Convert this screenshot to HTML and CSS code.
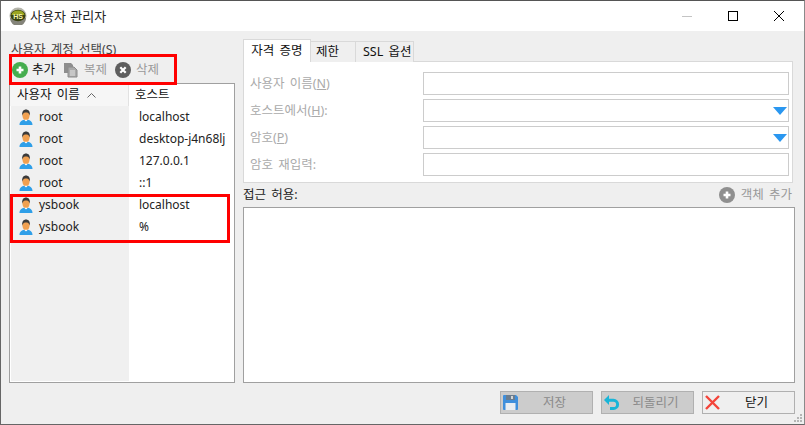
FILE: index.html
```html
<!DOCTYPE html>
<html lang="ko">
<head>
<meta charset="utf-8">
<title>사용자 관리자</title>
<link rel="stylesheet" href="styles.css">
</head>
<body>
<div class="window">
  <header class="titlebar">
    <svg class="app-icon" width="18" height="18" viewBox="0 0 18 18"><circle cx="9" cy="9" r="8.500" fill="#b5b5ab"/><path d="M1 11a8 8 0 0 0 16 0z" fill="#84847a"/><ellipse cx="9" cy="8.500" rx="7.500" ry="5.800" fill="#39420f"/><path d="M2.500 8a6.500 4.500 0 0 1 13 0z" fill="#9aa622"/><text x="9" y="11.500" class="app-text" text-anchor="middle">HS</text></svg>
    <span class="title">사용자 관리자</span>
    <div class="controls">
      <svg width="46" height="31" viewBox="0 0 46 31"><path d="M18 15.500h10" stroke="#c4c4c4"/></svg>
      <svg width="46" height="31" viewBox="0 0 46 31"><rect x="18.500" y="10.500" width="9" height="9" fill="none" stroke="#000"/></svg>
      <svg width="46" height="31" viewBox="0 0 46 31"><path d="M18 10l10 10M28 10l-10 10" stroke="#000" fill="none"/></svg>
    </div>
  </header>
  <main class="content">
    <section class="left">
      <div class="left-label">사용자 계정 선택(S)</div>
      <div class="toolbar">
        <span class="tool">
          <svg width="16" height="16" viewBox="0 0 16 16"><circle cx="8" cy="8" r="8" fill="#45ad4e"/><path d="M8 4.500v7M4.500 8h7" stroke="#fff" stroke-width="2.600"/></svg>
          <span>추가</span>
        </span>
        <span class="tool off">
          <svg width="16" height="16" viewBox="0 0 16 16"><path d="M1 1h7l2 2v8H1z" fill="#8d8d8d"/><path d="M5 5h6l3 3v7H5z" fill="#a9a9a9" stroke="#8a8a8a"/><path d="M7 9h5M7 11h5M7 13h5" stroke="#e4e4e4"/></svg>
          <span>복제</span>
        </span>
        <span class="tool off">
          <svg width="16" height="16" viewBox="0 0 16 16"><circle cx="8" cy="8" r="8" fill="#5e5e5e"/><path d="M5.300 5.300l5.400 5.400M10.700 5.300l-5.400 5.400" stroke="#fff" stroke-width="2.200"/></svg>
          <span>삭제</span>
        </span>
      </div>
      <div class="list">
        <div class="list-head">
          <div class="head-name">사용자 이름 <svg width="9" height="5" viewBox="0 0 9 5"><path d="M.5 4.500l4-4 4 4" fill="none" stroke="#666"/></svg></div>
          <div class="head-host">호스트</div>
        </div>
        <div class="list-body">
          <div class="name-col">
            <div class="row"><svg class="user" viewBox="0 0 16 16"><use href="#user"/></svg>root</div>
            <div class="row"><svg class="user" viewBox="0 0 16 16"><use href="#user"/></svg>root</div>
            <div class="row"><svg class="user" viewBox="0 0 16 16"><use href="#user"/></svg>root</div>
            <div class="row"><svg class="user" viewBox="0 0 16 16"><use href="#user"/></svg>root</div>
            <div class="row"><svg class="user" viewBox="0 0 16 16"><use href="#user"/></svg>ysbook</div>
            <div class="row"><svg class="user" viewBox="0 0 16 16"><use href="#user"/></svg>ysbook</div>
          </div>
          <div class="host-col">
            <div class="row">localhost</div>
            <div class="row">desktop-j4n68lj</div>
            <div class="row">127.0.0.1</div>
            <div class="row">::1</div>
            <div class="row">localhost</div>
            <div class="row">%</div>
          </div>
        </div>
      </div>
    </section>
    <section class="right">
      <div class="tabs">
        <div class="tab active">자격 증명</div>
        <div class="tab limit">제한</div>
        <div class="tab ssl">SSL 옵션</div>
      </div>
      <div class="form">
        <div class="field"><label>사용자 이름(<u>N</u>)</label><div class="input"></div></div>
        <div class="field"><label>호스트에서(<u>H</u>):</label><div class="input"><i class="caret"></i></div></div>
        <div class="field"><label>암호(<u>P</u>)</label><div class="input"><i class="caret"></i></div></div>
        <div class="field"><label>암호 재입력:</label><div class="input"></div></div>
      </div>
      <div class="access-head">
        <span>접근 허용:</span>
        <span class="add-object">
          <svg width="16" height="16" viewBox="0 0 16 16"><circle cx="8" cy="8" r="8" fill="#8f8f8f"/><path d="M8 4.500v7M4.500 8h7" stroke="#fff" stroke-width="2.600"/></svg>
          객체 추가
        </span>
      </div>
      <div class="access-box"></div>
    </section>
  </main>
  <footer class="footer">
    <div class="btn off">
      <svg width="17" height="17" viewBox="0 0 17 17"><path d="M1 2a1 1 0 0 1 1-1h12l2 2v12a1 1 0 0 1-1 1H2a1 1 0 0 1-1-1z" fill="#3f8fdc"/><rect x="4" y="1" width="9" height="5" fill="#6b7d8f"/><rect x="9" y="2" width="2" height="3" fill="#d5d5d5"/><rect x="3.500" y="9" width="10" height="7" fill="#e8edf2"/></svg>
      <span>저장</span>
    </div>
    <div class="btn off">
      <svg width="17" height="17" viewBox="0 0 17 17"><path d="M6 1L1 6l5 5V7.800h4.500a2.600 2.600 0 0 1 0 5.200H7v3h3.500a5.600 5.600 0 0 0 0-11.200H6z" fill="#19b5d8"/></svg>
      <span>되돌리기</span>
    </div>
    <div class="btn close">
      <svg width="17" height="17" viewBox="0 0 17 17"><path d="M2 2l13 13M15 2L2 15" stroke="#f4443a" stroke-width="2.400"/></svg>
      <span>닫기</span>
    </div>
  </footer>
  <div class="mark mark-toolbar"></div>
  <div class="mark mark-rows"></div>
  <svg class="grip" width="10" height="10" viewBox="0 0 10 10"><path d="M7 1h2v2H7zM4 4h2v2H4zM7 4h2v2H7zM1 7h2v2H1zM4 7h2v2H4zM7 7h2v2H7z" fill="#b5b5b5"/></svg>
</div>
<svg width="0" height="0" class="defs"><defs><g id="user"><path d="M1.500 16c0-3.500 2.500-5 4.500-5.300l2 1.300 2-1.300c2 .3 4.500 1.800 4.500 5.300z" fill="#2f9fe8"/><ellipse cx="8" cy="6.500" rx="3.600" ry="4.800" fill="#f0a050"/><path d="M4.200 6.500C3.800 2.500 5.500.5 8 .5s4.400 2 3.800 6C11 4 9.500 3.500 8 3.500S5 4 4.200 6.500z" fill="#3a3a3a"/><path d="M6.500 10.800L8 12.600l1.500-1.800z" fill="#fff"/></g></defs></svg>
</body>
</html>
```
FILE: styles.css
```css
* { box-sizing: border-box; }
html, body { margin: 0; height: 100%; }
body { width: 805px; height: 425px; overflow: hidden; font: 12.5px/16px "Noto Sans", "Noto Sans CJK KR", sans-serif; word-spacing: 2px; color: #111; }
.defs { position: absolute; }
.window { position: relative; width: 805px; height: 425px; background: #efefef; border: 1px solid #666; border-top-color: #555; border-right-color: #8a8a8a; display: flex; flex-direction: column; }
.titlebar { height: 30px; background: #fff; display: flex; align-items: center; padding-left: 8px; flex: none; }
.app-text { font: bold 7px "Liberation Sans", sans-serif; word-spacing: 0; fill: #f4f4b0; }
.title { margin-left: 3px; font-size: 13px; word-spacing: 1px; color: #222; }
.controls { margin-left: auto; display: flex; margin-right: 2px; }
.content { display: flex; flex: none; height: 352px; padding-left: 8px; }
.left { width: 226px; flex: none; display: flex; flex-direction: column; }
.left-label { height: 16px; margin-top: 11px; padding-left: 2px; color: #444; }
.toolbar { height: 26px; display: flex; align-items: center; padding-left: 3px; margin-top: -1px; }
.tool { display: inline-flex; align-items: center; gap: 4px; margin-right: 8px; }
.tool.off { color: #999; gap: 5px; }
.list { width: 226px; height: 300px; border: 1px solid #a0a0a0; background: #fff; display: flex; flex-direction: column; }
.list-head { display: flex; height: 22px; flex: none; align-items: center; }
.head-name { width: 118px; padding-left: 7px; display: flex; align-items: center; gap: 7px; background: #f6f6f6; height: 100%; }
.head-host { padding-left: 6px; border-left: 1px solid #e2e2e2; height: 100%; display: flex; align-items: center; }
.list-body { display: flex; flex: 1; }
.name-col { width: 118px; background: #f0f0f0; margin-left: 1px; margin-bottom: 1px; }
.host-col { padding-left: 10px; flex: 1; }
.row { height: 22px; display: flex; align-items: center; font-size: 12px; word-spacing: 0; color: #222; }
.user { width: 16px; height: 16px; margin: 0 5px 0 7px; flex: none; }
.right { width: 552px; margin-left: 8px; flex: none; display: flex; flex-direction: column; padding-top: 8px; }
.tabs { display: flex; height: 23px; align-items: flex-end; position: relative; z-index: 1; }
.tab { height: 21px; border: 1px solid #d9d9d9; border-bottom: 0; background: #efefef; text-align: center; line-height: 19px; margin-left: -1px; white-space: nowrap; }
.tab.active { height: 23px; width: 68px; background: #fff; margin-left: 0; line-height: 22px; padding-bottom: 2px; }
.tab.limit { width: 46px; text-align: left; padding-left: 5px; }
.tab.ssl { width: 59px; text-align: left; padding-left: 7px; }
.form { width: 550px; height: 122px; background: #fff; border: 1px solid #d9d9d9; margin-top: -1px; padding: 10px 3px 0 6px; display: flex; flex-direction: column; gap: 4px; }
.field { display: flex; align-items: center; height: 23px; flex: none; }
.field label { width: 173px; color: #aaa; flex: none; }
.input { width: 366px; height: 23px; border: 1px solid #ccc; background: #fff; display: flex; align-items: center; justify-content: flex-end; }
.caret { width: 0; height: 0; border-left: 7.500px solid transparent; border-right: 7.500px solid transparent; border-top: 8px solid #2a97f0; margin-right: 1px; }
.access-head { height: 24px; display: flex; align-items: center; justify-content: space-between; padding-right: 3px; color: #222; }
.add-object { display: inline-flex; align-items: center; gap: 6px; color: #999; }
.access-box { width: 552px; height: 176px; background: #fff; border: 1px solid #a0a0a0; }
.footer { display: flex; justify-content: flex-end; gap: 8px; padding: 8px 9px 0 0; }
.btn { width: 93px; height: 23px; border: 1px solid #b0b0b0; display: flex; align-items: center; padding-left: 1px; background: #efefef; }
.btn span { flex: 1; text-align: center; padding-right: 2px; }
.btn.off { background: #ccc; color: #8a8a8a; }
.btn.close { color: #111; }
.mark { position: absolute; border: 3px solid #f00; pointer-events: none; }
.mark-toolbar { left: 8px; top: 53px; width: 168px; height: 31px; }
.mark-rows { left: 9px; top: 193px; width: 220px; height: 49px; }
.grip { position: absolute; right: 1px; bottom: 1px; }
```
